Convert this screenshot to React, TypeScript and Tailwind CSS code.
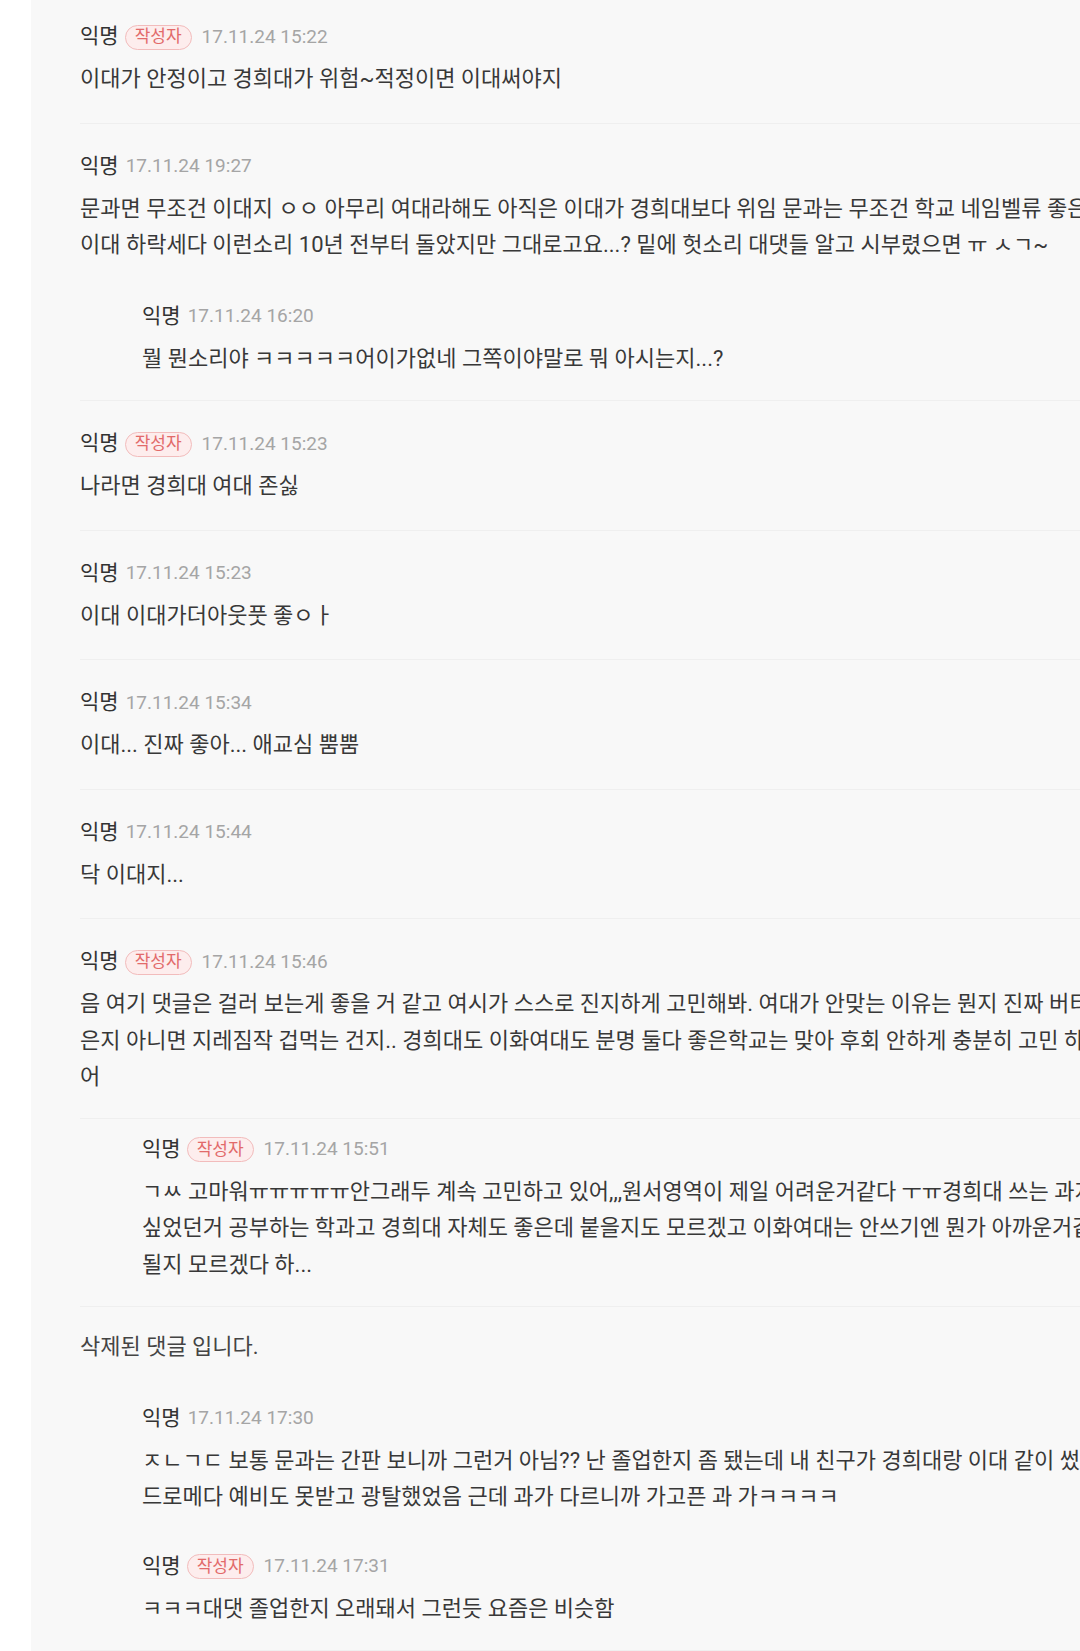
type Reply = {
  author: string
  writer?: boolean
  time: string
  lines: string[]
  pt: string
  divider?: boolean
}

type Comment = {
  author?: string
  writer?: boolean
  time?: string
  lines: string[]
  deleted?: boolean
  pt: string
  replies?: Reply[]
}

const comments: Comment[] = [
  {
    author: '익명',
    writer: true,
    time: '17.11.24 15:22',
    lines: ['이대가 안정이고 경희대가 위험~적정이면 이대써야지'],
    pt: 'pt-[24px]',
  },
  {
    author: '익명',
    time: '17.11.24 19:27',
    lines: [
      '문과면 무조건 이대지 ㅇㅇ 아무리 여대라해도 아직은 이대가 경희대보다 위임 문과는 무조건 학교 네임벨류 좋은',
      '이대 하락세다 이런소리 10년 전부터 돌았지만 그대로고요...? 밑에 헛소리 대댓들 알고 시부렸으면 ㅠ ㅅㄱ~',
    ],
    pt: 'pt-[30px]',
    replies: [
      {
        author: '익명',
        time: '17.11.24 16:20',
        lines: ['뭘 뭔소리야 ㅋㅋㅋㅋㅋ어이가없네 그쪽이야말로 뭐 아시는지...?'],
        pt: 'pt-[40px]',
      },
    ],
  },
  {
    author: '익명',
    writer: true,
    time: '17.11.24 15:23',
    lines: ['나라면 경희대 여대 존싫'],
    pt: 'pt-[30px]',
  },
  {
    author: '익명',
    time: '17.11.24 15:23',
    lines: ['이대 이대가더아웃풋 좋ㅇㅏ'],
    pt: 'pt-[30px]',
  },
  {
    author: '익명',
    time: '17.11.24 15:34',
    lines: ['이대... 진짜 좋아... 애교심 뿜뿜'],
    pt: 'pt-[30px]',
  },
  {
    author: '익명',
    time: '17.11.24 15:44',
    lines: ['닥 이대지...'],
    pt: 'pt-[30px]',
  },
  {
    author: '익명',
    writer: true,
    time: '17.11.24 15:46',
    lines: [
      '음 여기 댓글은 걸러 보는게 좋을 거 같고 여시가 스스로 진지하게 고민해봐. 여대가 안맞는 이유는 뭔지 진짜 버티',
      '은지 아니면 지레짐작 겁먹는 건지.. 경희대도 이화여대도 분명 둘다 좋은학교는 맞아 후회 안하게 충분히 고민 하',
      '어',
    ],
    pt: 'pt-[30px]',
    replies: [
      {
        author: '익명',
        writer: true,
        time: '17.11.24 15:51',
        lines: [
          'ㄱㅆ 고마워ㅠㅠㅠㅠㅠ안그래두 계속 고민하고 있어,,,원서영역이 제일 어려운거같다 ㅜㅠ경희대 쓰는 과지',
          '싶었던거 공부하는 학과고 경희대 자체도 좋은데 붙을지도 모르겠고 이화여대는 안쓰기엔 뭔가 아까운거같',
          '될지 모르겠다 하...',
        ],
        pt: 'pt-[18px]',
        divider: true,
      },
    ],
  },
  {
    deleted: true,
    lines: ['삭제된 댓글 입니다.'],
    pt: 'pt-[22px]',
    replies: [
      {
        author: '익명',
        time: '17.11.24 17:30',
        lines: [
          'ㅈㄴㄱㄷ 보통 문과는 간판 보니까 그런거 아님?? 난 졸업한지 좀 됐는데 내 친구가 경희대랑 이대 같이 썼',
          '드로메다 예비도 못받고 광탈했었음 근데 과가 다르니까 가고픈 과 가ㅋㅋㅋㅋ',
        ],
        pt: 'pt-[40px]',
      },
      {
        author: '익명',
        writer: true,
        time: '17.11.24 17:31',
        lines: ['ㅋㅋㅋ대댓 졸업한지 오래돼서 그런듯 요즘은 비슷함'],
        pt: 'pt-[38px]',
      },
    ],
  },
]

function Header({ author, writer, time }: { author: string; writer?: boolean; time: string }) {
  return (
    <div className="flex items-center h-[26px] whitespace-nowrap">
      <span className="text-[21px] text-[#333333]">{author}</span>
      {writer ? (
        <span className="ml-[6px] flex items-center h-[25px] px-[9px] rounded-full border border-[#f2bcbc] bg-[#fdeded] text-[17px] text-[#e26a6a]">
          작성자
        </span>
      ) : null}
      <span className={`${writer ? 'ml-[10px]' : 'ml-[7px]'} text-[19px] text-[#a5a5a5]`}>{time}</span>
    </div>
  )
}

function Body({ lines, muted }: { lines: string[]; muted?: boolean }) {
  return (
    <div className={`text-[22px] leading-[36.5px] whitespace-nowrap ${muted ? 'text-[#444444]' : 'text-[#383838]'}`}>
      {lines.map((line, i) => (
        <div key={i}>{line}</div>
      ))}
    </div>
  )
}

export default function App() {
  return (
    <div
      className="w-[1080px] h-[1651px] overflow-hidden bg-white"
      style={{ fontFamily: "Roboto, 'Noto Sans CJK KR', sans-serif" }}
    >
      <div className="ml-[31px] h-full bg-[#f8f8f8]">
        <div className="ml-[49px] w-[1200px]">
          {comments.map((c, i) => (
            <div key={i} className="border-b border-[#efefef]">
              <div className={c.pt}>
                {c.author && c.time ? (
                  <>
                    <Header author={c.author} writer={c.writer} time={c.time} />
                    <div className="mt-[11px]">
                      <Body lines={c.lines} />
                    </div>
                  </>
                ) : (
                  <Body lines={c.lines} muted={c.deleted} />
                )}
              </div>
              {c.replies?.map((r, j) => (
                <div key={j}>
                  {r.divider ? <div className="mt-[22px] border-t border-[#efefef]" /> : null}
                  <div className={`${r.pt} pl-[62px]`}>
                    <Header author={r.author} writer={r.writer} time={r.time} />
                    <div className="mt-[11px]">
                      <Body lines={r.lines} />
                    </div>
                  </div>
                </div>
              ))}
              <div className={c.replies ? 'h-[23px]' : 'h-[25px]'} />
            </div>
          ))}
        </div>
      </div>
    </div>
  )
}
